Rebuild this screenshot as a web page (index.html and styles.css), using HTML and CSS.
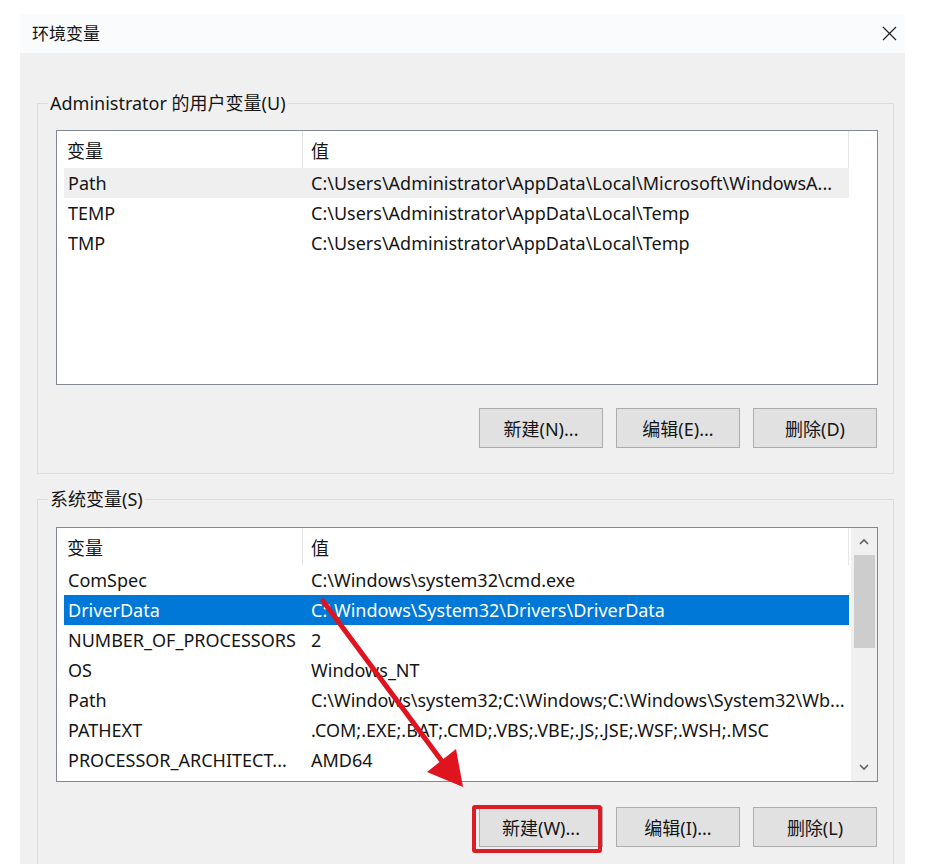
FILE: index.html
```html
<!DOCTYPE html>
<html lang="zh-CN">
<head>
<meta charset="utf-8">
<title>环境变量</title>
<link rel="stylesheet" href="styles.css">
</head>
<body>
<div class="window">
  <div class="titlebar">
    <span class="title">环境变量</span>
    <svg class="close" width="15" height="15" viewBox="0 0 15 15"><path d="M1 1L14 14M14 1L1 14" stroke="#222" stroke-width="1.2" fill="none"/></svg>
  </div>
  <div class="client">
    <fieldset class="group group-user">
      <legend>Administrator 的用户变量(U)</legend>
      <div class="list">
        <div class="list-main">
          <div class="row head"><div class="c1">变量</div><div class="c2">值</div></div>
          <div class="row hover"><div class="c1">Path</div><div class="c2">C:\Users\Administrator\AppData\Local\Microsoft\WindowsA...</div></div>
          <div class="row"><div class="c1">TEMP</div><div class="c2">C:\Users\Administrator\AppData\Local\Temp</div></div>
          <div class="row"><div class="c1">TMP</div><div class="c2">C:\Users\Administrator\AppData\Local\Temp</div></div>
        </div>
      </div>
      <div class="buttons">
        <button>新建(N)...</button>
        <button>编辑(E)...</button>
        <button>删除(D)</button>
      </div>
    </fieldset>
    <fieldset class="group group-sys">
      <legend>系统变量(S)</legend>
      <div class="list">
        <div class="list-main">
          <div class="row head"><div class="c1">变量</div><div class="c2">值</div></div>
          <div class="row"><div class="c1">ComSpec</div><div class="c2">C:\Windows\system32\cmd.exe</div></div>
          <div class="row sel"><div class="c1">DriverData</div><div class="c2">C:\Windows\System32\Drivers\DriverData</div></div>
          <div class="row"><div class="c1">NUMBER_OF_PROCESSORS</div><div class="c2">2</div></div>
          <div class="row"><div class="c1">OS</div><div class="c2">Windows_NT</div></div>
          <div class="row"><div class="c1">Path</div><div class="c2">C:\Windows\system32;C:\Windows;C:\Windows\System32\Wb...</div></div>
          <div class="row"><div class="c1">PATHEXT</div><div class="c2">.COM;.EXE;.BAT;.CMD;.VBS;.VBE;.JS;.JSE;.WSF;.WSH;.MSC</div></div>
          <div class="row"><div class="c1">PROCESSOR_ARCHITECT...</div><div class="c2">AMD64</div></div>
        </div>
        <div class="vscroll">
          <div class="sb-arrow"><svg width="10" height="7" viewBox="0 0 10 7"><polyline points="1,6 5,2 9,6" fill="none" stroke="#606060" stroke-width="1.6"/></svg></div>
          <div class="thumb"></div>
          <div class="sb-space"></div>
          <div class="sb-arrow"><svg width="10" height="7" viewBox="0 0 10 7"><polyline points="1,1 5,5 9,1" fill="none" stroke="#606060" stroke-width="1.6"/></svg></div>
        </div>
      </div>
      <div class="buttons">
        <button>新建(W)...</button>
        <button>编辑(I)...</button>
        <button>删除(L)</button>
      </div>
    </fieldset>
  </div>
</div>
<div class="redbox"></div>
<svg class="annot" width="934" height="864" viewBox="0 0 934 864">
  <line x1="323" y1="601" x2="444" y2="764" stroke="#e0141e" stroke-width="5" stroke-linecap="round"/>
  <polygon points="463,787 427,772 456,749" fill="#e0141e"/>
</svg>
</body>
</html>
```
FILE: styles.css
```css
* { box-sizing: border-box; }

body {
  margin: 0;
  background: #ffffff;
  font-family: "Noto Sans", "Noto Sans CJK SC", sans-serif;
  font-size: 18px;
  color: #151515;
}

.window {
  margin: 14px 0 0 20px;
  width: 885px;
}

.titlebar {
  height: 39px;
  background: #fafbfc;
  display: flex;
  align-items: center;
  justify-content: space-between;
  padding: 0 8px 0 12px;
}

.title {
  font-size: 17px;
  line-height: 24px;
}

.close { display: block; }

.client {
  background: #f0f0f0;
  height: 811px;
  padding: 38px 11px 0 17px;
  overflow: hidden;
}

.group {
  margin: 0;
  min-width: 0;
  border: 1px solid #dcdcdc;
  padding: 15px 15px 25px 18px;
}

.group legend {
  padding: 0 2px;
  margin-left: -8px;
  line-height: 24px;
  height: 24px;
}

.group-sys {
  margin-top: 13px;
  padding-top: 16px;
}

.list {
  height: 255px;
  border: 1px solid #828790;
  background: #ffffff;
  display: flex;
}

.list-main {
  flex: 1;
  padding-left: 7px;
}

.row {
  display: flex;
  align-items: center;
  height: 30px;
  width: 785px;
}

.row.head { height: 37px; }

.c1 {
  width: 239px;
  flex: none;
  padding-left: 4px;
  white-space: nowrap;
  overflow: hidden;
}

.c2 {
  flex: 1;
  min-width: 0;
  padding-left: 8px;
  white-space: nowrap;
  overflow: hidden;
}

.head .c1,
.head .c2 {
  height: 100%;
  display: flex;
  align-items: center;
  border-right: 1px solid #e5e5e5;
}

.head .c1 { padding-left: 3px; }

.row.hover { background: #efefef; }

.row.sel {
  background: #0078d7;
  color: #ffffff;
}

.vscroll {
  width: 26px;
  flex: none;
  margin-left: 1px;
  background: #f0f0f0;
  display: flex;
  flex-direction: column;
  align-items: center;
}

.sb-arrow {
  height: 27px;
  width: 100%;
  display: flex;
  align-items: center;
  justify-content: center;
}

.sb-arrow svg { display: block; }

.thumb {
  width: 21px;
  height: 93px;
  background: #cdcdcd;
}

.sb-space { flex: 1; }

.buttons {
  display: flex;
  justify-content: flex-end;
  gap: 13px;
  margin-top: 23px;
  margin-right: 1px;
}

.group-sys .buttons { margin-top: 25px; }

.buttons button {
  width: 124px;
  height: 40px;
  padding: 0;
  background: #e1e1e1;
  border: 1px solid #adadad;
  font: inherit;
  color: #151515;
}

.redbox {
  position: absolute;
  left: 472px;
  top: 805px;
  width: 130px;
  height: 48px;
  border: 4px solid #dc1c26;
  border-radius: 3px;
}

.annot {
  position: absolute;
  left: 0;
  top: 0;
  pointer-events: none;
}
```
